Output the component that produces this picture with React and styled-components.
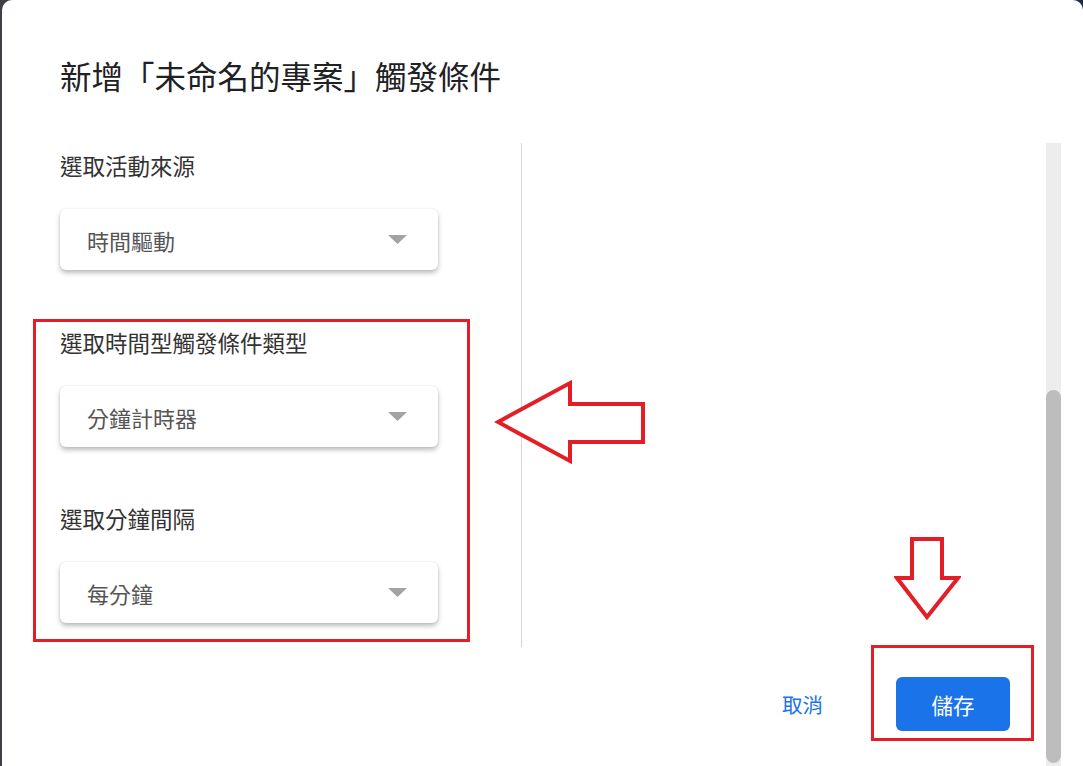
import React from "react";
import styled, { createGlobalStyle } from "styled-components";

// Page background behind the dialog
const GlobalStyle = createGlobalStyle`
  html, body {
    margin: 0;
    padding: 0;
    height: 100%;
  }
  body {
    background: linear-gradient(90deg, #3d4045 0%, #2a3140 60%, #1c2a42 100%);
    font-family: "Noto Sans CJK TC", "Noto Sans", sans-serif;
    overflow: hidden;
  }
  #root {
    height: 100%;
  }
`;

const Dialog = styled.div`
  margin-left: 2px;
  height: 766px;
  background: #fff;
  border-radius: 10px 10px 0 0;
  display: flex;
  flex-direction: column;
`;

const Header = styled.div`
  height: 143px;
  box-sizing: border-box;
  padding: 52px 0 0 58px;
`;

const Title = styled.h1`
  margin: 0;
  font-size: 31.5px;
  font-weight: 400;
  line-height: normal;
  color: #202124;
`;

const Main = styled.div`
  flex: 1;
  min-height: 0;
  display: flex;
`;

const Content = styled.div`
  flex: 1;
  position: relative;
  display: flex;
  flex-direction: column;
`;

const Columns = styled.div`
  display: flex;
`;

const LeftCol = styled.div`
  width: 520px;
  box-sizing: border-box;
  padding: 6px 83px 24px 58px;
  border-right: 1px solid #d6d6d6;
  display: flex;
  flex-direction: column;
  gap: 56px;
`;

const RightCol = styled.div`
  flex: 1;
`;

const Field = styled.div`
  display: flex;
  flex-direction: column;
  gap: 28px;
`;

const Label = styled.div`
  font-size: 22.5px;
  line-height: normal;
  color: #333;
`;

const Select = styled.div`
  height: 61px;
  box-sizing: border-box;
  display: flex;
  align-items: center;
  justify-content: space-between;
  padding: 0 31px 0 27px;
  border-radius: 6px;
  background: #fff;
  box-shadow: 0 3px 5px rgba(0, 0, 0, 0.26), 0 0 2px rgba(0, 0, 0, 0.1);
  font-size: 22px;
  color: #555;
`;

const Caret = styled.svg`
  width: 19px;
  height: 9px;
  fill: #a3a3a3;
`;

// red annotation frame drawn over a group of fields
const Highlight = styled.div`
  position: relative;
  display: flex;
  flex-direction: column;
  gap: 55px;
  &::after {
    content: "";
    position: absolute;
    inset: ${(p) => p.$inset};
    border: 3px solid #e31e27;
    pointer-events: none;
  }
`;

const Footer = styled.div`
  display: flex;
  justify-content: flex-end;
  align-items: center;
  padding: 30px 36px 0 0;
  gap: 61px;
`;

const TextButton = styled.button`
  height: 54px;
  padding: 0 12px;
  border: none;
  background: none;
  font-family: inherit;
  font-size: 20.5px;
  color: #1a73e8;
`;

const SaveWrap = styled(Highlight)`
  display: block;
`;

const PrimaryButton = styled.button`
  display: block;
  width: 114px;
  height: 54px;
  border: none;
  border-radius: 6px;
  background: #1a73e8;
  color: #fff;
  font-family: inherit;
  font-size: 21.5px;
`;

const Arrow = styled.svg`
  position: absolute;
  left: ${(p) => p.$left}px;
  top: ${(p) => p.$top}px;
  fill: #fff;
  stroke: #e31e27;
  stroke-width: 4;
  stroke-linejoin: miter;
`;

const ScrollTrack = styled.div`
  width: 15px;
  margin-right: 22px;
  background: #ededed;
  display: flex;
  flex-direction: column;
  justify-content: flex-end;
  padding-bottom: 3px;
  box-sizing: border-box;
`;

const ScrollThumb = styled.div`
  height: 373px;
  background: #bdbdbd;
  border-radius: 8px;
`;

function Dropdown({ value }) {
  return (
    <Select>
      <span>{value}</span>
      <Caret viewBox="0 0 19 9">
        <polygon points="0,0 19,0 9.5,9" />
      </Caret>
    </Select>
  );
}

export default function App() {
  return (
    <>
      <GlobalStyle />
      <Dialog>
        <Header>
          <Title>新增「未命名的專案」觸發條件</Title>
        </Header>
        <Main>
          <Content>
            <Columns>
              <LeftCol>
                <Field>
                  <Label>選取活動來源</Label>
                  <Dropdown value="時間驅動" />
                </Field>
                <Highlight $inset="-7px -32px -19px -27px">
                  <Field>
                    <Label>選取時間型觸發條件類型</Label>
                    <Dropdown value="分鐘計時器" />
                  </Field>
                  <Field>
                    <Label>選取分鐘間隔</Label>
                    <Dropdown value="每分鐘" />
                  </Field>
                </Highlight>
              </LeftCol>
              <RightCol />
            </Columns>
            <Footer>
              <TextButton>取消</TextButton>
              <SaveWrap $inset="-32px -24px -10px -25px">
                <PrimaryButton>儲存</PrimaryButton>
              </SaveWrap>
            </Footer>

            {/* annotation arrows */}
            <Arrow $left={492} $top={236} width="152" height="86" viewBox="0 0 152 86">
              <polygon points="4,43 76,4 76,25 149,25 149,63 76,63 76,82" />
            </Arrow>
            <Arrow $left={892} $top={393} width="67" height="84" viewBox="0 0 67 84">
              <polygon points="18,3 48,3 48,42 64,42 33,81 3,42 18,42" />
            </Arrow>
          </Content>
          <ScrollTrack>
            <ScrollThumb />
          </ScrollTrack>
        </Main>
      </Dialog>
    </>
  );
}
